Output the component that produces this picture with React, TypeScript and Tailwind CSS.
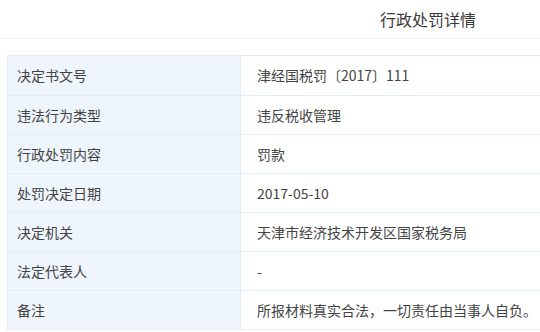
import React from "react";

const rows: [string, string][] = [
  ["决定书文号", "津经国税罚〔2017〕111"],
  ["违法行为类型", "违反税收管理"],
  ["行政处罚内容", "罚款"],
  ["处罚决定日期", "2017-05-10"],
  ["决定机关", "天津市经济技术开发区国家税务局"],
  ["法定代表人", "-"],
  ["备注", "所报材料真实合法，一切责任由当事人自负。"],
];

export default function App() {
  return (
    <div
      className="w-[540px] h-[332px] bg-white overflow-hidden text-[#444]"
      style={{ fontFamily: '"Noto Sans CJK SC", "Noto Sans", sans-serif' }}
    >
      <div className="h-[39px] border-b border-[#f0f2f5] flex items-center pl-[380px] text-[16px] text-[#3a3a3a]">
        行政处罚详情
      </div>
      <div className="ml-[7px] mt-[16px] border-t border-l border-b border-[#e4edf8] text-[14px]">
        {rows.map(([k, v], i) => (
          <div
            key={k}
            className={
              "flex h-[39px] " + (i > 0 ? "border-t border-[#e4edf8]" : "")
            }
          >
            <div className="w-[233px] shrink-0 bg-[#eef5fd] flex items-center pl-[9px] border-r border-[#e4edf8]">
              {k}
            </div>
            <div className="flex-1 flex items-center pl-[16px] whitespace-nowrap">
              {v}
            </div>
          </div>
        ))}
      </div>
    </div>
  );
}
